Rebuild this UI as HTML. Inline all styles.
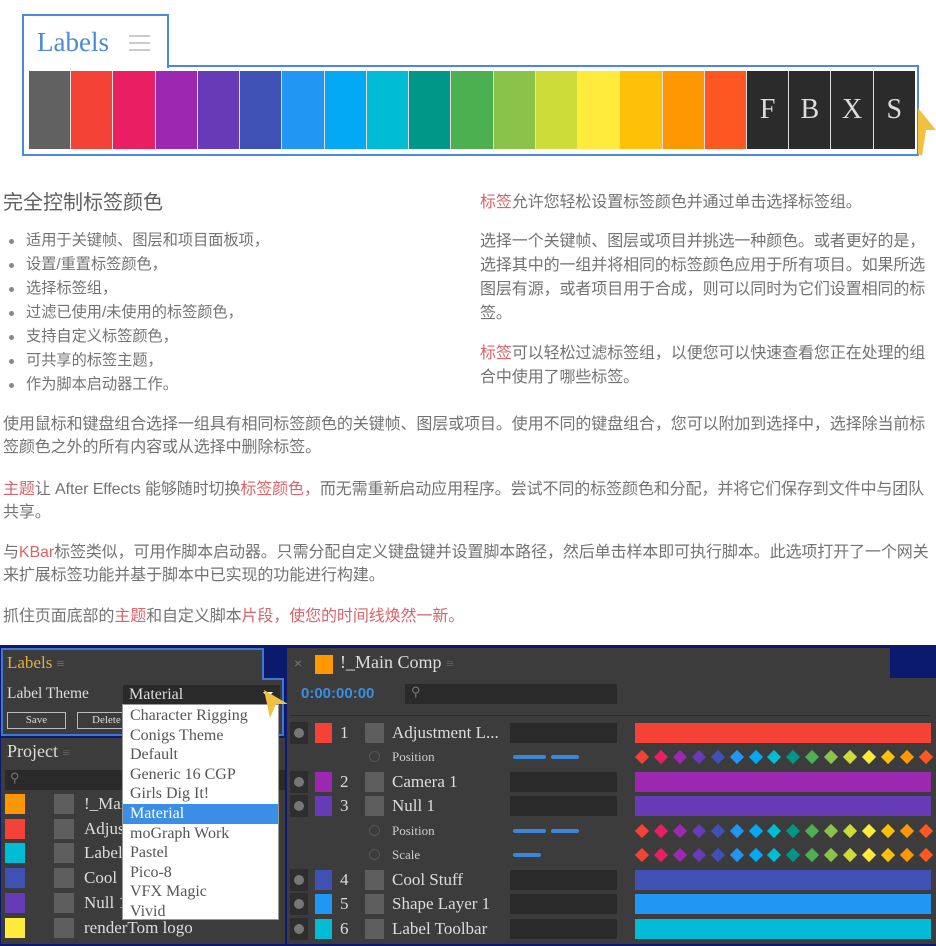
<!DOCTYPE html>
<html><head><meta charset="utf-8"><style>
*{margin:0;padding:0;box-sizing:border-box}
body{width:936px;height:946px;overflow:hidden;background:#fff;position:relative;font-family:"Liberation Sans","Noto Sans CJK SC",sans-serif;color:#737373}
.a{position:absolute;white-space:nowrap}
.t{font-size:16px;line-height:24px;letter-spacing:-0.1px}
.r{color:#d9646a}
.b{font-size:15.2px;line-height:24px}
.dot{position:absolute;left:9px;top:10px;width:5px;height:5px;border-radius:50%;background:#888}
.sf{background:#2b2b2b;color:#ddd;font-family:"Liberation Serif",serif;font-size:28px;text-align:center;line-height:78px}
.ae{font-family:"Liberation Serif","DejaVu Serif",serif}
.dk{background:#3c3c3c}
.kf{position:absolute;left:637px;width:294px;height:14px;display:flex;justify-content:space-between}
.kf span{width:10px;height:10px;transform:rotate(45deg);margin-top:2px}
.kf span:nth-child(1){background:#f44336}.kf span:nth-child(2){background:#e91e63}.kf span:nth-child(3){background:#9c27b0}.kf span:nth-child(4){background:#673ab7}.kf span:nth-child(5){background:#3f51b5}.kf span:nth-child(6){background:#2196f3}.kf span:nth-child(7){background:#03a9f4}.kf span:nth-child(8){background:#00bcd4}.kf span:nth-child(9){background:#009688}.kf span:nth-child(10){background:#4caf50}.kf span:nth-child(11){background:#8bc34a}.kf span:nth-child(12){background:#cddc39}.kf span:nth-child(13){background:#ffeb3b}.kf span:nth-child(14){background:#ffc107}.kf span:nth-child(15){background:#ff9800}.kf span:nth-child(16){background:#ff5722}
.lr{position:absolute;left:288px;width:640px;height:22px}
.lr .d{position:absolute;left:2px;top:0;width:18px;height:22px;background:#2e2e2e}
.lr .d:after{content:"";position:absolute;left:4px;top:6px;width:10px;height:10px;border-radius:50%;background:#777}
.lr .c{position:absolute;left:27px;top:1px;width:17px;height:20px}
.lr .n{position:absolute;left:52px;top:0;font-size:17px;color:#ddd;line-height:22px}
.lr .g{position:absolute;left:77px;top:1px;width:19px;height:20px;background:#5e5e5e}
.lr .nm{position:absolute;left:104px;top:0;font-size:17px;color:#ddd;line-height:22px}
.lr .bx{position:absolute;left:222px;top:1px;width:107px;height:20px;background:#2a2a2a}
.lr .bar{position:absolute;left:347px;top:1px;width:296px;height:20px}
.pr{position:absolute;left:360px;width:260px;height:20px}
.pr .o{position:absolute;left:9px;top:4px;width:11px;height:11px;border-radius:50%;border:1px solid #555}
.pr .l{position:absolute;left:32px;top:0;font-size:13px;color:#ccc;line-height:20px}
.pr .dash{position:absolute;top:8px;height:4px;border-radius:2px;background:#3a86d8}
.pj{position:absolute;left:0;width:285px;height:22px}
.pj .c{position:absolute;left:5px;top:1px;width:20px;height:20px}
.pj .g{position:absolute;left:54px;top:1px;width:20px;height:20px;background:#5e5e5e}
.pj .nm{position:absolute;left:84px;top:0;font-size:17px;color:#ddd;line-height:22px}
.dd div{height:19.6px;line-height:19.6px;padding-left:7px;font-size:16px;color:#555}
</style></head><body>

<div class="a" style="left:22px;top:14px;width:147px;height:54px;border:2px solid #4a8ad6;border-bottom:none;background:#fff;z-index:2"></div>
<div class="a" style="left:22px;top:65px;width:897px;height:91px;border:2px solid #4a8ad6"></div>
<div class="a" style="left:24px;top:66px;width:143px;height:4px;background:#fff;z-index:3"></div>
<div class="a ae" style="left:37px;top:26px;font-size:27px;color:#4a8ad6;z-index:4;line-height:32px">Labels</div>
<div class="a" style="left:129px;top:35px;width:21px;z-index:4"><div style="height:2px;background:#ccc;margin-bottom:5px"></div><div style="height:2px;background:#ccc;margin-bottom:5px"></div><div style="height:2px;background:#ccc"></div></div>
<div class="a" style="left:29px;top:71px;width:886px;height:78px;display:flex;gap:1px;background:#ddd">
<div style="flex:1;background:#616161"></div><div style="flex:1;background:#f44336"></div><div style="flex:1;background:#e91e63"></div><div style="flex:1;background:#9c27b0"></div><div style="flex:1;background:#673ab7"></div><div style="flex:1;background:#3f51b5"></div><div style="flex:1;background:#2196f3"></div><div style="flex:1;background:#03a9f4"></div><div style="flex:1;background:#00bcd4"></div><div style="flex:1;background:#009688"></div><div style="flex:1;background:#4caf50"></div><div style="flex:1;background:#8bc34a"></div><div style="flex:1;background:#cddc39"></div><div style="flex:1;background:#ffeb3b"></div><div style="flex:1;background:#ffc107"></div><div style="flex:1;background:#ff9800"></div><div style="flex:1;background:#ff5722"></div>
<div class="sf" style="flex:1">F</div><div class="sf" style="flex:1">B</div><div class="sf" style="flex:1">X</div><div class="sf" style="flex:1">S</div>
</div>
<svg class="a" style="left:914px;top:108px" width="22" height="50"><polygon points="4,0 22,22 12,22 8,48 4,46" fill="#f0c040"/></svg>

<div class="a" style="left:3px;top:190px;font-size:20px;line-height:26px;color:#606060">完全控制标签颜色</div>
<div class="a b" style="left:0;top:229px"><i class="dot"></i><span style="position:absolute;left:26px">适用于关键帧、图层和项目面板项，</span></div>
<div class="a b" style="left:0;top:253px"><i class="dot"></i><span style="position:absolute;left:26px">设置/重置标签颜色，</span></div>
<div class="a b" style="left:0;top:277px"><i class="dot"></i><span style="position:absolute;left:26px">选择标签组，</span></div>
<div class="a b" style="left:0;top:301px"><i class="dot"></i><span style="position:absolute;left:26px">过滤已使用/未使用的标签颜色，</span></div>
<div class="a b" style="left:0;top:325px"><i class="dot"></i><span style="position:absolute;left:26px">支持自定义标签颜色，</span></div>
<div class="a b" style="left:0;top:349px"><i class="dot"></i><span style="position:absolute;left:26px">可共享的标签主题，</span></div>
<div class="a b" style="left:0;top:373px"><i class="dot"></i><span style="position:absolute;left:26px">作为脚本启动器工作。</span></div>

<div class="a t" style="left:480px;top:191px"><span class="r">标签</span>允许您轻松设置标签颜色并通过单击选择标签组。</div>
<div class="a t" style="left:480px;top:230px">选择一个关键帧、图层或项目并挑选一种颜色。或者更好的是，</div>
<div class="a t" style="left:480px;top:254px">选择其中的一组并将相同的标签颜色应用于所有项目。如果所选</div>
<div class="a t" style="left:480px;top:278px">图层有源，或者项目用于合成，则可以同时为它们设置相同的标</div>
<div class="a t" style="left:480px;top:302px">签。</div>
<div class="a t" style="left:480px;top:342px"><span class="r">标签</span>可以轻松过滤标签组，以便您可以快速查看您正在处理的组</div>
<div class="a t" style="left:480px;top:366px">合中使用了哪些标签。</div>

<div class="a t" style="left:3px;top:413px">使用鼠标和键盘组合选择一组具有相同标签颜色的关键帧、图层或项目。使用不同的键盘组合，您可以附加到选择中，选择除当前标</div>
<div class="a t" style="left:3px;top:436px">签颜色之外的所有内容或从选择中删除标签。</div>
<div class="a t" style="left:3px;top:478px"><span class="r">主题</span>让 After Effects 能够随时切换<span class="r">标签颜色，</span>而无需重新启动应用程序。尝试不同的标签颜色和分配，并将它们保存到文件中与团队</div>
<div class="a t" style="left:3px;top:501px">共享。</div>
<div class="a t" style="left:3px;top:541px">与<span class="r">KBar</span>标签类似，可用作脚本启动器。只需分配自定义键盘键并设置脚本路径，然后单击样本即可执行脚本。此选项打开了一个网关</div>
<div class="a t" style="left:3px;top:564px">来扩展标签功能并基于脚本中已实现的功能进行构建。</div>
<div class="a t" style="left:3px;top:605px">抓住页面底部的<span class="r">主题</span>和自定义脚本<span class="r">片段，使您的时间线焕然一新。</span></div>

<div class="a" style="left:0;top:645px;width:936px;height:301px;background:#0b1a6e"></div>
<div class="a dk" style="left:1px;top:648px;width:263px;height:88px;border:2px solid #3f78d0;border-right:none"></div>
<div class="a dk" style="left:262px;top:678px;width:22px;height:58px;border:2px solid #3f78d0;border-left:none"></div>
<div class="a" style="left:262px;top:648px;width:2px;height:32px;background:#3f78d0"></div>
<div class="a ae" style="left:7px;top:653px;font-size:17px;color:#e0b040">Labels <span style="color:#777;font-size:14px">≡</span></div>
<div class="a ae" style="left:7px;top:685px;font-size:15.5px;color:#ddd">Label Theme</div>
<div class="a ae" style="left:123px;top:685px;width:157px;height:20px;background:#2a2a2a;color:#ddd;font-size:16px;line-height:20px;padding-left:6px">Material<span style="position:absolute;right:7px;top:7px;border:5px solid transparent;border-top:6px solid #fff"></span></div>
<div class="a ae" style="left:7px;top:712px;width:59px;height:17px;border:1px solid #bbb;color:#ddd;font-size:11px;text-align:center;line-height:15px">Save</div>
<div class="a ae" style="left:77px;top:712px;width:50px;height:17px;border:1px solid #bbb;border-right:none;color:#ddd;font-size:11px;line-height:15px;padding-left:14px;overflow:hidden">Delete</div>
<div class="a dk" style="left:1px;top:738px;width:284px;height:206px"></div>
<div class="a ae" style="left:7px;top:741px;font-size:18px;color:#ddd">Project <span style="color:#666;font-size:14px">≡</span></div>
<div class="a" style="left:5px;top:770px;width:280px;height:20px;background:#2a2a2a;color:#777;font-size:13px;padding-left:5px">⚲</div>
<div class="pj ae" style="top:793px"><i class="c" style="background:#ff9800"></i><i class="g"></i><span class="nm">!_Main Comp</span></div>
<div class="pj ae" style="top:818px"><i class="c" style="background:#f44336"></i><i class="g"></i><span class="nm">Adjustment Layer</span></div>
<div class="pj ae" style="top:842px"><i class="c" style="background:#00bcd4"></i><i class="g"></i><span class="nm">Label Toolbar</span></div>
<div class="pj ae" style="top:867px"><i class="c" style="background:#3f51b5"></i><i class="g"></i><span class="nm">Cool Stuff</span></div>
<div class="pj ae" style="top:892px"><i class="c" style="background:#673ab7"></i><i class="g"></i><span class="nm">Null 1</span></div>
<div class="pj ae" style="top:917px"><i class="c" style="background:#ffeb3b"></i><i class="g"></i><span class="nm">renderTom logo</span></div>
<div class="a dd ae" style="left:122px;top:704px;width:157px;height:216px;background:#fff;padding-top:1px;border:1px solid #999">
<div>Character Rigging</div><div>Conigs Theme</div><div>Default</div><div>Generic 16 CGP</div><div>Girls Dig It!</div><div style="background:#3a8ee6;color:#fff">Material</div><div>moGraph Work</div><div>Pastel</div><div>Pico-8</div><div>VFX Magic</div><div>Vivid</div></div>
<svg class="a" style="left:262px;top:690px" width="26" height="30"><polygon points="2,0 26,14 14,14 8,28" fill="#f0c040"/></svg>

<div class="a dk" style="left:287px;top:648px;width:649px;height:296px"></div>
<div class="a" style="left:890px;top:648px;width:46px;height:30px;background:#0b1a6e"></div>
<div class="a" style="left:294px;top:655px;color:#777;font-size:14px">×</div>
<div class="a" style="left:315px;top:655px;width:18px;height:19px;background:#ff9800"></div>
<div class="a ae" style="left:340px;top:652px;font-size:18px;color:#ddd">!_Main Comp <span style="color:#666;font-size:14px">≡</span></div>
<div class="a" style="left:301px;top:685px;font-size:15px;font-weight:bold;color:#3b8fe0">0:00:00:00</div>
<div class="a" style="left:405px;top:684px;width:212px;height:20px;background:#2a2a2a;color:#777;font-size:13px;padding-left:6px">⚲</div>
<div class="a" style="left:290px;top:715px;width:640px;height:1px;background:#2e2e2e"></div>

<div class="lr ae" style="top:722px"><i class="d"></i><i class="c" style="background:#f44336"></i><span class="n">1</span><i class="g"></i><span class="nm">Adjustment L...</span><i class="bx"></i><i class="bar" style="background:#f44336"></i></div>
<div class="pr ae" style="top:747px"><i class="o"></i><span class="l">Position</span><i class="dash" style="left:153px;width:33px"></i><i class="dash" style="left:191px;width:28px"></i></div>
<div class="kf" style="top:750px"><span></span><span></span><span></span><span></span><span></span><span></span><span></span><span></span><span></span><span></span><span></span><span></span><span></span><span></span><span></span><span></span></div>
<div class="lr ae" style="top:771px"><i class="d"></i><i class="c" style="background:#9c27b0"></i><span class="n">2</span><i class="g"></i><span class="nm">Camera 1</span><i class="bx"></i><i class="bar" style="background:#9c27b0"></i></div>
<div class="lr ae" style="top:795px"><i class="d"></i><i class="c" style="background:#673ab7"></i><span class="n">3</span><i class="g"></i><span class="nm">Null 1</span><i class="bx"></i><i class="bar" style="background:#673ab7"></i></div>
<div class="pr ae" style="top:821px"><i class="o"></i><span class="l">Position</span><i class="dash" style="left:153px;width:33px"></i><i class="dash" style="left:191px;width:28px"></i></div>
<div class="kf" style="top:824px"><span></span><span></span><span></span><span></span><span></span><span></span><span></span><span></span><span></span><span></span><span></span><span></span><span></span><span></span><span></span><span></span></div>
<div class="pr ae" style="top:845px"><i class="o"></i><span class="l">Scale</span><i class="dash" style="left:153px;width:28px"></i></div>
<div class="kf" style="top:848px"><span></span><span></span><span></span><span></span><span></span><span></span><span></span><span></span><span></span><span></span><span></span><span></span><span></span><span></span><span></span><span></span></div>
<div class="lr ae" style="top:869px"><i class="d"></i><i class="c" style="background:#3f51b5"></i><span class="n">4</span><i class="g"></i><span class="nm">Cool Stuff</span><i class="bx"></i><i class="bar" style="background:#3f51b5"></i></div>
<div class="lr ae" style="top:893px"><i class="d"></i><i class="c" style="background:#2196f3"></i><span class="n">5</span><i class="g"></i><span class="nm">Shape Layer 1</span><i class="bx"></i><i class="bar" style="background:#2196f3"></i></div>
<div class="lr ae" style="top:918px"><i class="d"></i><i class="c" style="background:#00bcd4"></i><span class="n">6</span><i class="g"></i><span class="nm">Label Toolbar</span><i class="bx"></i><i class="bar" style="background:#00bcd4"></i></div>
</body></html>
